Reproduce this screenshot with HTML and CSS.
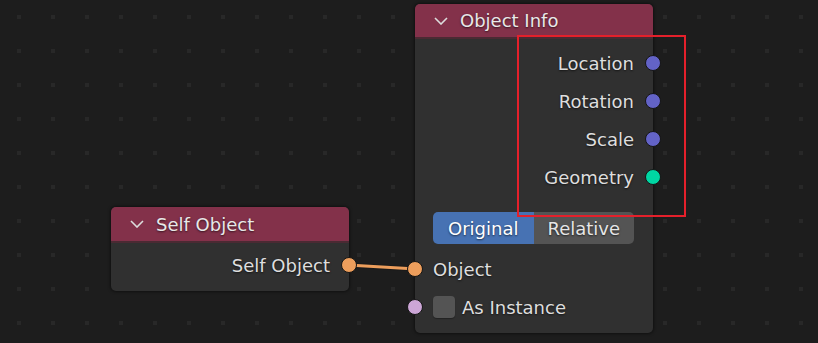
FILE: index.html
```html
<!DOCTYPE html>
<html lang="en">
<head>
  <meta charset="UTF-8">
  <title>Object Info Node</title>
  <link rel="stylesheet" href="styles.css">
</head>
<body>
  <div class="canvas">
    <!-- link between Self Object and Object input -->
    <svg class="links" width="818" height="343">
      <line x1="348" y1="265" x2="416" y2="269" stroke="#1a1a1a" stroke-width="5"/>
      <line x1="348" y1="265" x2="416" y2="269" stroke="#ed9e5c" stroke-width="3"/>
    </svg>

    <div class="node node-self">
      <div class="node-header header-tall">
        <svg class="chevron" width="14" height="8" viewBox="0 0 14 8"><polyline points="1,1 7,7 13,1" fill="none" stroke="#dcdcdc" stroke-width="1.6"/></svg>
        <span>Self Object</span>
      </div>
      <div class="node-body self-body">
        <div class="row output">
          <span>Self Object</span>
          <span class="socket out orange"></span>
        </div>
      </div>
    </div>

    <div class="node node-info">
      <div class="node-header">
        <svg class="chevron" width="14" height="8" viewBox="0 0 14 8"><polyline points="1,1 7,7 13,1" fill="none" stroke="#dcdcdc" stroke-width="1.6"/></svg>
        <span>Object Info</span>
      </div>
      <div class="node-body">
        <div class="row output"><span>Location</span><span class="socket out purple"></span></div>
        <div class="row output"><span>Rotation</span><span class="socket out purple"></span></div>
        <div class="row output"><span>Scale</span><span class="socket out purple"></span></div>
        <div class="row output"><span>Geometry</span><span class="socket out green"></span></div>

        <div class="toggle">
          <span class="toggle-item active">Original</span>
          <span class="toggle-item">Relative</span>
        </div>

        <div class="row input first-input"><span class="socket in orange"></span><span>Object</span></div>
        <div class="row input">
          <span class="socket in pink"></span>
          <span class="checkbox"></span>
          <span>As Instance</span>
        </div>
      </div>
    </div>

    <div class="highlight"></div>
  </div>
</body>
</html>
```

FILE: styles.css
```css
body {
  margin: 0;
  background: #1d1d1d;
  font-family: "DejaVu Sans", sans-serif;
}

.canvas {
  position: relative;
  width: 818px;
  height: 343px;
  overflow: hidden;
  background-color: #1d1d1d;
  background-image:
    linear-gradient(90deg, #1d1d1d 30px, transparent 30px),
    linear-gradient(#1d1d1d 30px, #282828 30px);
  background-size: 34px 34px;
  background-position: 21px 19px;
}

.links {
  position: absolute;
  left: 0;
  top: 0;
}

.node {
  position: absolute;
  width: 238px;
  background: #303030;
  border-radius: 5px;
  box-shadow: 0 0 3px 1px rgba(0, 0, 0, 0.45);
  color: #dedede;
  font-size: 18px;
  text-shadow: 0 1px 2px rgba(0, 0, 0, 0.6);
}

.node-info {
  left: 415px;
  top: 4px;
  height: 329px;
}

.node-self {
  left: 111px;
  top: 207px;
  height: 84px;
}

.node-header {
  display: flex;
  align-items: center;
  gap: 12px;
  height: 33px;
  padding-left: 19px;
  background: #83314a;
  border-bottom: 2px solid #4a2a33;
  border-radius: 5px 5px 0 0;
  color: #e8e8e8;
}

.header-tall {
  height: 34px;
}

.chevron {
  flex: none;
}

.node-body {
  padding: 5px 0 0;
}

.self-body {
  padding-top: 3px;
}

.row {
  position: relative;
  display: flex;
  align-items: center;
  height: 38px;
}

.row.output {
  justify-content: flex-end;
  padding-right: 19px;
}

.row.input {
  padding-left: 18px;
  gap: 7px;
}

.first-input {
  margin-top: 6px;
}

.socket {
  position: absolute;
  top: 11px;
  width: 14px;
  height: 14px;
  border: 1px solid #151515;
  border-radius: 50%;
}

.socket.out {
  right: -8px;
}

.socket.in {
  left: -8px;
}

.purple { background: #6363c7; }
.green { background: #00d6a3; }
.orange { background: #ed9e5c; }
.pink { background: #cca6d6; }

.checkbox {
  width: 22px;
  height: 22px;
  background: #545454;
  border-radius: 4px;
  box-shadow: 0 1px 1px rgba(0, 0, 0, 0.3);
}

.toggle {
  display: flex;
  margin: 16px 19px 0 18px;
  height: 32px;
  border-radius: 5px;
  overflow: hidden;
}

.toggle-item {
  flex: 1;
  display: flex;
  align-items: center;
  justify-content: center;
  background: #545454;
  color: #e6e6e6;
}

.toggle-item.active {
  background: #4772b3;
  color: #ffffff;
}

.highlight {
  position: absolute;
  left: 517px;
  top: 35px;
  width: 165px;
  height: 178px;
  border: 2px solid #e5202b;
}
```
